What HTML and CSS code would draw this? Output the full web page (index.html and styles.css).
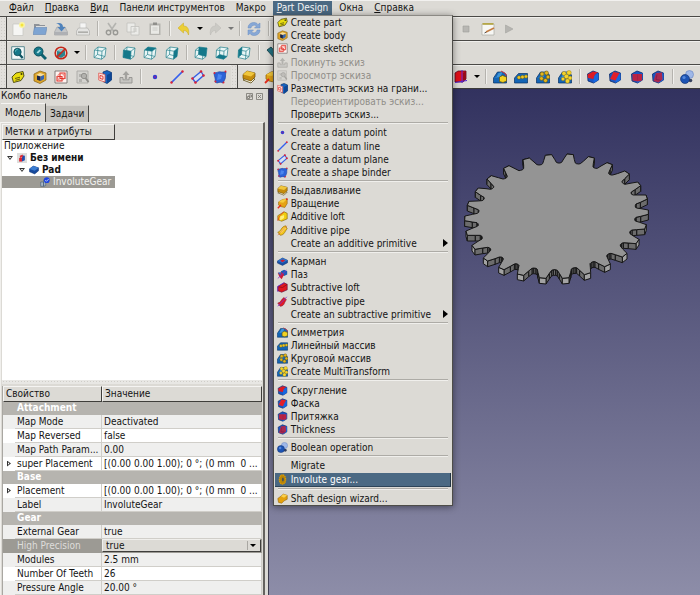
FILE: index.html
```html
<!DOCTYPE html>
<html lang="ru">
<head>
<meta charset="utf-8">
<title>Part Design</title>
<link rel="stylesheet" href="styles.css">
</head>
<body>
<svg class="defs" aria-hidden="true">
  <symbol id="new" viewBox="0 0 14 14"><path d="M2 2h10v11.500H2z" fill="#f6f6f4" stroke="#c4c4c0" stroke-width=".7"/><circle cx="11" cy="3" r="3" fill="#fbf4a0"/><circle cx="11" cy="3" r="1.500" fill="#f4e43c"/></symbol>
  <symbol id="open" viewBox="0 0 14 14"><path d="M1 12V2h5l1 1h5v9z" fill="#8e9298"/><path d="M3 4h9v4H3z" fill="#e0e0de"/><path d="M0 12.500l1.500-7H14L12.500 12.500z" fill="#7ea4d2" stroke="#6688b4" stroke-width=".6"/></symbol>
  <symbol id="save" viewBox="0 0 14 14"><path d="M3 5h8l2.500 5v3H.5v-3z" fill="#c4c6c8" stroke="#9a9ca0" stroke-width=".6"/><path d="M1 10h12v3H1z" fill="#aeb0b4"/><path d="M2 1.500c4-1.500 7 0 7 3.500h2.500L7.500 9.500 3.500 5H6c0-2-1-3-4-3.500z" fill="#4f82bb"/></symbol>
  <symbol id="print" viewBox="0 0 14 14"><path d="M4 1h6v6H4z" fill="#f5f5f4" stroke="#c4c4c4" stroke-width=".6"/><path d="M2.500 6h9L13.500 9v4H.5V9z" fill="#e4e4e2" stroke="#a8a8a6" stroke-width=".6"/><path d="M2 9.500h10v1.300H2z" fill="#a0a09c"/></symbol>
  <symbol id="cut" viewBox="0 0 14 14"><path d="M3 1l5.500 8M11 1L5.500 9" stroke="#b4b4b0" stroke-width="1.600" fill="none"/><circle cx="3.500" cy="10.500" r="2.200" fill="none" stroke="#989894" stroke-width="1.400"/><circle cx="10.500" cy="10.500" r="2.200" fill="none" stroke="#989894" stroke-width="1.400"/></symbol>
  <symbol id="copy" viewBox="0 0 14 14"><path d="M1 1h8v9H1zM5 4.500h8V13H5z" fill="#ebebe8" stroke="#c2c2be" stroke-width=".8"/><path d="M7 7h4M7 9h4" stroke="#c6c6c2" stroke-width=".8"/></symbol>
  <symbol id="paste" viewBox="0 0 14 14"><path d="M1.500 1.500h11V13h-11z" fill="#b5b4af"/><path d="M3 3.500h8v8.300H3z" fill="#e9e9e5"/><path d="M5 .5h4v2.500H5z" fill="#8f8f8b"/><path d="M4.500 6h5M4.500 8h5" stroke="#cacac6"/></symbol>
  <symbol id="undo" viewBox="0 0 14 14"><path d="M1 6l5.500-5v3c4 0 6 3 5 9-1-3-2-4.500-5-4.500V11z" fill="#eccf35" stroke="#c8a91c" stroke-width=".5"/></symbol>
  <symbol id="redo" viewBox="0 0 14 14"><path d="M13 6L7.500 1v3c-4 0-6 3-5 9 1-3 2-4.500 5-4.500V11z" fill="#cbcac5" stroke="#bab9b4" stroke-width=".5"/></symbol>
  <symbol id="refresh" viewBox="0 0 14 14"><path d="M1 6c0-6 8-7 10-3.500L13 1v5H7.500l2-2C8 2.500 4.500 3 4 6z" fill="#87a8d6" stroke="#6b8fc2" stroke-width=".5"/><path d="M13 8c0 6-8 7-10 3.500L1 13V8h5.500l-2 2c1.500 1.500 5 1 5.500-2z" fill="#87a8d6" stroke="#6b8fc2" stroke-width=".5"/></symbol>
  <symbol id="fit" viewBox="0 0 14 14"><path d="M.7.700h12.600v12.600H.7z" fill="#f3fafa" stroke="#3b747c" stroke-width=".8"/><path d="M8.500 8.500l3.200 3.500" stroke="#0e5563" stroke-width="2.400"/><circle cx="6.500" cy="6" r="3.700" fill="#16798a" stroke="#0c4650" stroke-width=".8"/><path d="M4.500 5.500c0-1.500 1-2 2-2" stroke="#6cc" fill="none"/></symbol>
  <symbol id="zoomsel" viewBox="0 0 14 14"><path d="M8.500 8.500l4.500 4.500" stroke="#0e6170" stroke-width="3"/><circle cx="5.500" cy="5.500" r="4.500" fill="#16798a" stroke="#0c4e5a"/><path d="M3.500 6.500l3-3 1.500 1-3 3z" fill="#a8dce2"/></symbol>
  <symbol id="nodraw" viewBox="0 0 14 14"><path d="M3 5l4-2 4 1.500v5L7 12l-4-2z" fill="#2c8490"/><path d="M3 5l4-2 4 1.500L7.500 6z" fill="#8cc8cc"/><circle cx="7" cy="7" r="5.800" fill="none" stroke="#c3281a" stroke-width="1.600"/><path d="M3 11l8-8" stroke="#c3281a" stroke-width="1.700"/></symbol>
  <symbol id="cube" viewBox="0 0 14 14"><path d="M5 1l8 1-1 8.500L8.500 13.300 1 11.500 1.500 4z" fill="#e9f6f6"/><path d="M1.500 4l7.500 1.200-.5 8L1 11.500zM9 5.200L13 2M8.500 13.300L12 10.500 13 2 5 1 1.500 4M5 1l-.5 7.500L1 11.500M4.500 8.500l7.500 2" fill="none" stroke="#2f8590" stroke-width=".75"/></symbol>
  <symbol id="front" viewBox="0 0 14 14"><use href="#cube"/><path d="M1.500 4L9 5.200l-.5 8L1 11.500z" fill="#14788a"/></symbol>
  <symbol id="top" viewBox="0 0 14 14"><use href="#cube"/><path d="M5 1l8 1-4 3.200L1.500 4z" fill="#14788a"/></symbol>
  <symbol id="right" viewBox="0 0 14 14"><use href="#cube"/><path d="M9 5.200L13 2l-1 8.500-3.500 2.800z" fill="#14788a"/></symbol>
  <symbol id="rear" viewBox="0 0 14 14"><use href="#cube"/><path d="M5 1l8 1-1 8.500-7.500-2z" fill="#14788a"/></symbol>
  <symbol id="bottom" viewBox="0 0 14 14"><use href="#cube"/><path d="M4.500 8.500l7.500 2-3.500 2.800L1 11.500z" fill="#14788a"/></symbol>
  <symbol id="left" viewBox="0 0 14 14"><use href="#cube"/><path d="M5 1l-.5 7.500L1 11.500 1.500 4z" fill="#14788a"/></symbol>
  <symbol id="ruler" viewBox="0 0 14 14"><path d="M1 4l4-3 8 9-4 3z" fill="#247484" stroke="#0d3941" stroke-width=".8"/></symbol>
  <symbol id="part" viewBox="0 0 14 14"><path d="M1 7l4-4 7-1.500L13 6l-3 4.500L2.500 12.500z" fill="#e8dc10" stroke="#45420a" stroke-width=".9"/><path d="M4 8.500l5-1.300M4.500 10.300l4.500-1.300" stroke="#55510c" stroke-width=".9"/><circle cx="10.500" cy="4" r="1" fill="#3d3a08"/></symbol>
  <symbol id="body" viewBox="0 0 14 14"><path d="M1 4l6-3 6 2v7l-6 3.500L1 11z" fill="#dda52a" stroke="#856011" stroke-width=".7"/><path d="M3 5l4-2 4.500 1.500L7.500 6.500z" fill="#f6dfa0"/><path d="M4 5.500l3.500 1V11L4 9.700z" fill="#182348"/><path d="M7.500 6.500L11 5v4L7.500 11z" fill="#3566b4"/></symbol>
  <symbol id="sketch" viewBox="0 0 14 14"><path d="M1 1h12v12H1z" fill="#fff3f0" stroke="#77716e" stroke-width=".9"/><path d="M3 6.500h5V11H3zM6 3h5v5.500H6z" fill="none" stroke="#e2322a" stroke-width="1.100"/><circle cx="7" cy="7" r="3.500" fill="none" stroke="#e66860" stroke-width=".8"/></symbol>
  <symbol id="viewsk" viewBox="0 0 14 14"><path d="M1 1h11v12H1z" fill="#d4d3cf" stroke="#aaa9a5" stroke-width=".9"/><path d="M3 4h3v3H3zM3 9h3v3H3z" fill="#b4b3af"/><circle cx="8" cy="6" r="2.700" fill="#b3b2ae" stroke="#92918d"/><path d="M9.500 8l3 4" stroke="#8f8e8a" stroke-width="1.800"/></symbol>
  <symbol id="mapsk" viewBox="0 0 14 14"><path d="M5 2l4-1.500 4.500 2V10L9 13.500l-4-2z" fill="#1763bf" stroke="#0a2a60" stroke-width=".7"/><path d="M9 5l4.500-2.500V10L9 13.500z" fill="#0e4795"/><path d="M.7 3L7 4.500v7.500L.7 10z" fill="#fde9e6" stroke="#e05a50" stroke-width=".8"/><path d="M2 5.500l3 .8v3L2 8.500z" fill="none" stroke="#dc2b24" stroke-width=".9"/></symbol>
  <symbol id="leave" viewBox="0 0 14 14"><path d="M1 7.500h3v2.300h6V7.500h3V13H1z" fill="#c6c5c1" stroke="#93928e" stroke-width=".9"/><path d="M7 1l3.500 4H8.200v4H5.800V5H3.500z" fill="#a3a29e"/></symbol>
  <symbol id="point" viewBox="0 0 14 14"><circle cx="7" cy="7" r="2.200" fill="#2d3fd4"/><circle cx="7" cy="7" r="1" fill="#8c1f9c"/></symbol>
  <symbol id="line" viewBox="0 0 14 14"><path d="M1.500 12.500l11-11" stroke="#3560ee" stroke-width="1.700"/><circle cx="1.500" cy="12.500" r="1.200" fill="#dc2338"/><circle cx="12.500" cy="1.500" r="1.200" fill="#dc2338"/></symbol>
  <symbol id="plane" viewBox="0 0 14 14"><path d="M1.500 8.500L10 1.500l2.500 4L4.500 12.500z" fill="#d8e1f4" stroke="#3560e4" stroke-width="1.400"/><g fill="#dc2338"><circle cx="1.500" cy="8.500" r="1.300"/><circle cx="10" cy="1.500" r="1.300"/><circle cx="12.500" cy="5.500" r="1.300"/><circle cx="4.500" cy="12.500" r="1.300"/></g></symbol>
  <symbol id="binder" viewBox="0 0 14 14"><path d="M1 3c3 0 5-2 7-1h5c-1 3 0 5-1 7l-2 4c-2-1-3-1-6 0L2 12c1-4-1-6-1-9z" fill="#2c63d8" stroke="#1e43a4" stroke-width=".7"/><path d="M5 4l4 1-1 4-4 1z" fill="#4b86ee"/><g fill="#dc2338"><circle cx="1.500" cy="3" r="1"/><circle cx="12.500" cy="1.500" r="1"/><circle cx="10.500" cy="12.500" r="1"/><circle cx="2.500" cy="11.500" r="1"/></g></symbol>
  <symbol id="pad" viewBox="0 0 14 14"><path d="M1 10l4-3 8 2-4 4z" fill="#f8f4df" stroke="#5a4a10" stroke-width=".8"/><path d="M1 4.500L5 1l8 2v4L9 11 1 8.500z" fill="#c68d0d" stroke="#6c4b06" stroke-width=".7"/><path d="M1 4.500L5 1l8 2-4 3.500z" fill="#f0c63c"/></symbol>
  <symbol id="rev" viewBox="0 0 14 14"><path d="M2 5l5-3 6-1v6l-3 5-5-1-3-2z" fill="#e5a416" stroke="#8d5c06" stroke-width=".7"/><path d="M2 5l5-3 6-1-5 5z" fill="#f6cc3c"/><path d="M1 13l4-4" stroke="#e22c1c" stroke-width="1.800"/><circle cx="12.500" cy="1.500" r="1.200" fill="#e22c1c"/></symbol>
  <symbol id="aloft" viewBox="0 0 14 14"><path d="M1 6l8-5 4 2v7l-7 3-5-2z" fill="#f0cd10" stroke="#806208" stroke-width=".8"/><path d="M4 7l5-2v4l-5 3z" fill="#ffef7c"/><path d="M1 12.500l2-6 6-5.500" stroke="#e8431f" fill="none" stroke-width="1.100"/></symbol>
  <symbol id="apipe" viewBox="0 0 14 14"><path d="M1 9c4 0 4-7 10-8l2 4c-3 2-3 8-9 8z" fill="#f2c420" stroke="#8d6806" stroke-width=".8"/><path d="M4 9.500c3-1 4-5 7-6" stroke="#fff08c" fill="none" stroke-width="1.500"/><path d="M1 13L12.500 1" stroke="#e6632a" stroke-width=".8"/></symbol>
  <symbol id="pocket" viewBox="0 0 14 14"><path d="M.5 6.500L7 2.500l6.500 3v3L7 12 .5 9z" fill="#1850a6" stroke="#0b2a66" stroke-width=".6"/><path d="M.5 6.500L7 2.500l6.500 3L7 9z" fill="#2c72cc"/><path d="M4 6l3-1.500 3.500 1.200L7 8z" fill="#cd1d32"/></symbol>
  <symbol id="padtree" viewBox="0 0 14 14"><path d="M.5 5.500L6 1.500l7.500 2.500v4L8 12.500.5 9.500z" fill="#17499c" stroke="#0b2a66" stroke-width=".6"/><path d="M.5 5.500L6 1.500l7.500 2.500L8 8z" fill="#3c7ed2"/></symbol>
  <symbol id="groove" viewBox="0 0 14 14"><path d="M5 3l4-2 4 2v4L9 9 5 7z" fill="#1d5cb8"/><path d="M1 5l5-1 3 3-3 6-3-3z" fill="#cf1d30"/><path d="M1 4.500h5L4 8z" fill="#2a6fd0"/><path d="M1 12L12 1.500" stroke="#8b2ac8"/></symbol>
  <symbol id="sloft" viewBox="0 0 14 14"><path d="M1 6l8-5 4 2v7l-7 3-5-2z" fill="#df1820" stroke="#570b3f" stroke-width=".8"/><path d="M1 6l6 1 6-4" stroke="#8e0e1a" fill="none"/><path d="M1 12.500v-7L9 1" stroke="#6626c4" fill="none"/></symbol>
  <symbol id="spipe" viewBox="0 0 14 14"><path d="M1 9c4 0 4-5 8-7l3 3c-3 2-2 8-8 8z" fill="#e21b28" stroke="#8a1436" stroke-width=".8"/><path d="M1 13L12.500 1" stroke="#7a2cd0"/></symbol>
  <symbol id="base" viewBox="0 0 14 14"><path d="M.5 13V8l4-6h6l3 3v8z" fill="#1465b5" stroke="#073163" stroke-width=".7"/><path d="M.5 8l3-1 2-4 4-1-2 5z" fill="#3c94d6"/></symbol>
  <symbol id="mirror" viewBox="0 0 14 14"><use href="#base"/><path d="M6.500 7l3-1.500 4 1.500v4l-3.500 1.500-3.500-1z" fill="#f3d222" stroke="#665207" stroke-width=".7"/><path d="M8 1l5 3v2" stroke="#c93843" fill="none"/></symbol>
  <symbol id="linear" viewBox="0 0 14 14"><path d="M.5 13V8l4-4.500h9V13z" fill="#1465b5" stroke="#073163" stroke-width=".7"/><g fill="#efc61e" stroke="#645006" stroke-width=".4"><circle cx="5" cy="7.500" r="1.800"/><circle cx="8.500" cy="7" r="1.800"/><circle cx="12" cy="6.500" r="1.700"/></g></symbol>
  <symbol id="polar" viewBox="0 0 14 14"><use href="#base"/><g fill="#e4b51a" stroke="#5c4a06" stroke-width=".5"><circle cx="6" cy="4" r="2"/><circle cx="10.500" cy="3" r="2"/><circle cx="12" cy="7" r="1.900"/><circle cx="9.500" cy="10.500" r="2"/><circle cx="5.500" cy="8.500" r="1.900"/></g></symbol>
  <symbol id="multi" viewBox="0 0 14 14"><use href="#base"/><g fill="#f6d42c" stroke="#8c700a" stroke-width=".4"><circle cx="6" cy="3.500" r="2.100"/><circle cx="11" cy="2.800" r="2.300"/><circle cx="8.500" cy="6.500" r="2.300"/><circle cx="12" cy="8" r="2"/><circle cx="9.500" cy="11" r="2.200"/><circle cx="5" cy="9" r="1.800"/></g></symbol>
  <symbol id="solid" viewBox="0 0 14 14"><path d="M1.500 4L7 1l5.500 2v7L7.500 13 2 11z" fill="#1957c4" stroke="#0b2968" stroke-width=".8"/><path d="M7.500 6l5-3v7l-5 3z" fill="#1667e0"/></symbol>
  <symbol id="fillet" viewBox="0 0 14 14"><use href="#solid"/><path d="M1.500 4.500L7 1.500l5 1C9 3.500 8 6 7.500 9L2 8z" fill="#dc1b25"/></symbol>
  <symbol id="chamfer" viewBox="0 0 14 14"><use href="#solid"/><path d="M5.500 2l6 1-4 7.500L2 9z" fill="#e2202a"/></symbol>
  <symbol id="draft" viewBox="0 0 14 14"><use href="#solid"/><path d="M2.500 4h9.500v6.500l-4 1-5.500-1z" fill="#b92344"/><path d="M7.500 4.500v6" stroke="#94204a" stroke-width=".6"/></symbol>
  <symbol id="thick" viewBox="0 0 14 14"><use href="#solid"/><path d="M5 3l6-.5.500 7-4 3-5-1.500z" fill="#a92950"/><path d="M6 4.500l-1 5 5 1" stroke="#7a1a48" stroke-width=".7" fill="none"/></symbol>
  <symbol id="bool" viewBox="0 0 14 14"><circle cx="10.500" cy="10.500" r="1.800" fill="#35415e"/><circle cx="9.500" cy="4.500" r="4" fill="#9fb8e8" stroke="#6484c2" stroke-width=".6"/><circle cx="5" cy="9" r="4.500" fill="#1d54b4" stroke="#0b2b6c" stroke-width=".6"/><circle cx="4" cy="7.500" r="1.600" fill="#5287dc"/></symbol>
  <symbol id="gear" viewBox="0 0 14 14"><ellipse cx="7" cy="7" rx="4" ry="6" fill="#b98506" stroke="#d89b08" stroke-width="1.600" stroke-dasharray="1.600 .8"/><ellipse cx="7.500" cy="7" rx="1.200" ry="2.500" fill="#44535a"/></symbol>
  <symbol id="shaft" viewBox="0 0 14 14"><path d="M1 7l4-3 3-2.500L13 3v5l-4 2-3 3-4-1z" fill="#e4a10c" stroke="#8b5c05" stroke-width=".7"/><path d="M5 4l3-2.500L13 3l-4 3z" fill="#fad04c"/></symbol>
  <symbol id="redcube" viewBox="0 0 14 14"><path d="M1 3l3-2h8v8l-3 3H1z" fill="#e00f18" stroke="#5c0720" stroke-width=".8"/><path d="M9 3l3-2v8l-3 3z" fill="#960b17"/><path d="M8 0v13M1 12.500l12-2" stroke="#5428d4"/></symbol>
  <symbol id="stop" viewBox="0 0 14 14"><path d="M4 4h6v6H4z" fill="#b8b7b3" stroke="#9f9e9a" stroke-width=".6"/></symbol>
  <symbol id="note" viewBox="0 0 14 14"><path d="M1 2h12v11H1z" fill="#f7f7f4" stroke="#aaa9a5" stroke-width=".7"/><path d="M1.500 1h11v1.800h-11z" fill="#b5a748"/><path d="M5 10l8-4" stroke="#c47d42" stroke-width="1.800"/><path d="M3.500 11l2-1" stroke="#555"/></symbol>
  <symbol id="play" viewBox="0 0 14 14"><path d="M3.500 3l7.500 4-7.500 4z" fill="#b6b5b1" stroke="#a5a4a0" stroke-width=".6"/></symbol>
  <symbol id="doc" viewBox="0 0 14 14"><path d="M0 0h14v14H0z" fill="#dededc"/><path d="M3 7h4v5H3z" fill="#dc2632"/><path d="M7 3l4 1v6l-4 2z" fill="#214cae"/><path d="M4 4l4-2v4L4 7z" fill="#e42b34"/></symbol>
  <symbol id="geartree" viewBox="0 0 14 14"><path d="M1 7h4v6H1zM5 4l3 2v6l-3 1z" fill="#a9b8c8" stroke="#3e5774" stroke-width=".8"/><circle cx="9.500" cy="4.500" r="4" fill="#1f46e0"/><path d="M7.500 4.500l1.500 1.500 3-3" stroke="#fff" fill="none"/></symbol>
</svg>

<nav class="menubar">
  <button><u>Ф</u>айл</button><button><u>П</u>равка</button><button><u>В</u>ид</button><button>Панели инструментов</button><button>Макро</button>
  <div class="menu-host">
    <button class="open"><u>P</u>art Design</button>
    <div class="popup" role="menu">
      <button role="menuitem"><svg><use href="#part"/></svg>Create part</button>
      <button role="menuitem"><svg><use href="#body"/></svg>Create body</button>
      <button role="menuitem"><svg><use href="#sketch"/></svg>Create sketch</button>
      <button role="menuitem" disabled><svg><use href="#leave"/></svg>Покинуть эскиз</button>
      <button role="menuitem" disabled><svg><use href="#viewsk"/></svg>Просмотр эскиза</button>
      <button role="menuitem"><svg><use href="#mapsk"/></svg>Разместить эскиз на грани...</button>
      <button role="menuitem" disabled><svg></svg>Переориентировать эскиз...</button>
      <button role="menuitem"><svg></svg>Проверить эскиз...</button>
      <hr>
      <button role="menuitem"><svg><use href="#point"/></svg>Create a datum point</button>
      <button role="menuitem"><svg><use href="#line"/></svg>Create a datum line</button>
      <button role="menuitem"><svg><use href="#plane"/></svg>Create a datum plane</button>
      <button role="menuitem"><svg><use href="#binder"/></svg>Create a shape binder</button>
      <hr>
      <button role="menuitem"><svg><use href="#pad"/></svg>Выдавливание</button>
      <button role="menuitem"><svg><use href="#rev"/></svg>Вращение</button>
      <button role="menuitem"><svg><use href="#aloft"/></svg>Additive loft</button>
      <button role="menuitem"><svg><use href="#apipe"/></svg>Additive pipe</button>
      <button role="menuitem" class="sub"><svg></svg>Create an additive primitive</button>
      <hr>
      <button role="menuitem"><svg><use href="#pocket"/></svg>Карман</button>
      <button role="menuitem"><svg><use href="#groove"/></svg>Паз</button>
      <button role="menuitem"><svg><use href="#sloft"/></svg>Subtractive loft</button>
      <button role="menuitem"><svg><use href="#spipe"/></svg>Subtractive pipe</button>
      <button role="menuitem" class="sub"><svg></svg>Create an subtractive primitive</button>
      <hr>
      <button role="menuitem"><svg><use href="#mirror"/></svg>Симметрия</button>
      <button role="menuitem"><svg><use href="#linear"/></svg>Линейный массив</button>
      <button role="menuitem"><svg><use href="#polar"/></svg>Круговой массив</button>
      <button role="menuitem"><svg><use href="#multi"/></svg>Create MultiTransform</button>
      <hr>
      <button role="menuitem"><svg><use href="#fillet"/></svg>Скругление</button>
      <button role="menuitem"><svg><use href="#chamfer"/></svg>Фаска</button>
      <button role="menuitem"><svg><use href="#draft"/></svg>Притяжка</button>
      <button role="menuitem"><svg><use href="#thick"/></svg>Thickness</button>
      <hr>
      <button role="menuitem"><svg><use href="#bool"/></svg>Boolean operation</button>
      <hr>
      <button role="menuitem"><svg></svg>Migrate</button>
      <button role="menuitem" class="current"><svg><use href="#gear"/></svg>Involute gear...</button>
      <hr>
      <button role="menuitem"><svg><use href="#shaft"/></svg>Shaft design wizard...</button>
    </div>
  </div>
  <button>Окна</button><button><u>С</u>правка</button>
</nav>

<div class="toolbar">
  <i class="grip"></i>
  <div class="group file">
    <button aria-label="New"><svg><use href="#new"/></svg></button><button aria-label="Open"><svg><use href="#open"/></svg></button><button aria-label="Save"><svg><use href="#save"/></svg></button><button aria-label="Print"><svg><use href="#print"/></svg></button><i class="sep"></i>
    <button aria-label="Cut"><svg><use href="#cut"/></svg></button><button aria-label="Copy"><svg><use href="#copy"/></svg></button><button aria-label="Paste"><svg><use href="#paste"/></svg></button><i class="sep"></i>
    <button aria-label="Undo"><svg><use href="#undo"/></svg></button><button class="drop" aria-label="Undo list"></button><button aria-label="Redo"><svg><use href="#redo"/></svg></button><button class="drop off" aria-label="Redo list"></button><i class="sep"></i>
    <button aria-label="Refresh"><svg><use href="#refresh"/></svg></button>
  </div>
  <i class="sep"></i>
  <div class="group macro">
    <button aria-label="Stop"><svg><use href="#stop"/></svg></button><button aria-label="Macros"><svg><use href="#note"/></svg></button><button aria-label="Run"><svg><use href="#play"/></svg></button>
  </div>
</div>
<div class="toolbar">
  <i class="grip"></i>
  <div class="group view-tools">
    <button aria-label="Fit all"><svg><use href="#fit"/></svg></button><button aria-label="Fit selection"><svg><use href="#zoomsel"/></svg></button><button aria-label="Draw style"><svg><use href="#nodraw"/></svg></button><button class="drop" aria-label="Draw styles"></button><i class="sep"></i>
    <button aria-label="Axonometric"><svg><use href="#cube"/></svg></button><i class="sep"></i>
    <button aria-label="Front"><svg><use href="#front"/></svg></button><button aria-label="Top"><svg><use href="#top"/></svg></button><button aria-label="Right"><svg><use href="#right"/></svg></button><i class="sep"></i>
    <button aria-label="Rear"><svg><use href="#rear"/></svg></button><button aria-label="Bottom"><svg><use href="#bottom"/></svg></button><button aria-label="Left"><svg><use href="#left"/></svg></button>
  </div>
  <i class="sep"></i>
  <button class="fixed" aria-label="Measure"><svg><use href="#ruler"/></svg></button>
</div>
<div class="toolbar">
  <i class="grip"></i>
  <div class="group design">
    <button aria-label="Part"><svg><use href="#part"/></svg></button><button aria-label="Body"><svg><use href="#body"/></svg></button><button aria-label="Sketch"><svg><use href="#sketch"/></svg></button><button aria-label="View sketch"><svg><use href="#viewsk"/></svg></button><button aria-label="Map sketch"><svg><use href="#mapsk"/></svg></button><button aria-label="Leave sketch"><svg><use href="#leave"/></svg></button><i class="sep"></i>
    <button aria-label="Point"><svg><use href="#point"/></svg></button><button aria-label="Line"><svg><use href="#line"/></svg></button><button aria-label="Plane"><svg><use href="#plane"/></svg></button><button aria-label="Binder"><svg><use href="#binder"/></svg></button>
  </div>
  <i class="grip"></i>
  <button class="fixed" aria-label="Pad"><svg><use href="#pad"/></svg></button><button class="fixed" aria-label="Revolution"><svg><use href="#rev"/></svg></button>
  <div class="group transform">
    <button aria-label="Primitive"><svg><use href="#redcube"/></svg></button><button class="drop" aria-label="Primitives"></button><i class="sep"></i>
    <button aria-label="Mirror"><svg><use href="#mirror"/></svg></button><button aria-label="Linear pattern"><svg><use href="#linear"/></svg></button><button aria-label="Polar pattern"><svg><use href="#polar"/></svg></button><button aria-label="MultiTransform"><svg><use href="#multi"/></svg></button><i class="sep"></i>
    <button aria-label="Fillet"><svg><use href="#fillet"/></svg></button><button aria-label="Chamfer"><svg><use href="#chamfer"/></svg></button><button aria-label="Draft"><svg><use href="#draft"/></svg></button><button aria-label="Thickness"><svg><use href="#thick"/></svg></button><i class="sep"></i>
    <button aria-label="Boolean"><svg><use href="#bool"/></svg></button>
  </div>
</div>

<main>
  <aside>
    <header class="dock-title"><span>Комбо панель</span>
      <button aria-label="Float"><svg viewBox="0 0 7 7"><path d="M.5.500h6v6h-6zM3 2h2.500v2H3zM1.500 3.500h2v2h-2z"/></svg></button>
      <button aria-label="Close"><svg viewBox="0 0 7 7"><path d="M.5.500h6v6h-6zM2 2l3 3M5 2L2 5"/></svg></button>
    </header>
    <div class="tabs" role="tablist"><button role="tab" class="active">Модель</button><button role="tab">Задачи</button></div>
    <section class="pane">
      <div class="tree">
        <div class="tree-head"><button>Метки и атрибуты</button></div>
        <ul>
          <li>Приложение</li>
          <li class="l1"><i class="caret"></i><svg><use href="#doc"/></svg><b>Без имени</b></li>
          <li class="l2"><i class="caret"></i><svg><use href="#padtree"/></svg><b>Pad</b></li>
          <li class="l3"><svg><use href="#geartree"/></svg>InvoluteGear</li>
        </ul>
      </div>
      <div class="splitter"></div>
      <div class="props">
        <table>
          <colgroup><col class="c-mark"><col class="c-name"><col></colgroup>
          <thead><tr><th colspan="2">Свойство</th><th>Значение</th></tr></thead>
          <tbody>
            <tr class="cat"><td></td><td colspan="2">Attachment</td></tr>
            <tr class="alt"><td></td><td>Map Mode</td><td>Deactivated</td></tr>
            <tr><td></td><td>Map Reversed</td><td>false</td></tr>
            <tr class="alt"><td></td><td>Map Path Param...</td><td>0.00</td></tr>
            <tr><td><i class="closed"></i></td><td>super Placement</td><td>[(0.00 0.00 1.00); 0 °; (0 mm&nbsp; 0 ...</td></tr>
            <tr class="cat"><td></td><td colspan="2">Base</td></tr>
            <tr><td><i class="closed"></i></td><td>Placement</td><td>[(0.00 0.00 1.00); 0 °; (0 mm&nbsp; 0 ...</td></tr>
            <tr class="alt"><td></td><td>Label</td><td>InvoluteGear</td></tr>
            <tr class="cat"><td></td><td colspan="2">Gear</td></tr>
            <tr class="alt"><td></td><td>External Gear</td><td>true</td></tr>
            <tr class="picked"><td></td><td><label for="precision">High Precision</label></td><td class="edit"><div class="combo"><select id="precision"><option>true</option><option>false</option></select></div></td></tr>
            <tr class="alt"><td></td><td>Modules</td><td>2.5 mm</td></tr>
            <tr><td></td><td>Number Of Teeth</td><td>26</td></tr>
            <tr class="alt"><td></td><td>Pressure Angle</td><td>20.00 °</td></tr>
          </tbody>
        </table>
      </div>
    </section>
  </aside>
  <div class="viewport"><svg id="model" viewBox="0 0 615 435"></svg></div>
</main>
<script src="gear.js"></script>
</body>
</html>
```
FILE: styles.css
```css
* { box-sizing: border-box; }
body {
  margin: 0;
  height: 100vh;
  display: flex;
  flex-direction: column;
  overflow: hidden;
  background: #dcdad5;
  color: #141414;
  font: 10px/12px "DejaVu Sans Condensed", "DejaVu Sans", sans-serif;
}
button, select { font: inherit; color: inherit; border: 0; padding: 0; margin: 0; background: none; }
svg { display: block; flex: none; }
.defs { position: absolute; width: 0; height: 0; }

.menubar { display: flex; gap: 3px; height: 16px; padding-left: 5px; border-top: 1px solid #f2f1ef; flex: none; }
.menubar > button, .menu-host > button { padding: 0 4px; height: 14px; white-space: nowrap; }
.menu-host { position: relative; }
.menu-host .open { background: #4b6983; color: #f4f4f4; }
.popup {
  position: absolute;
  z-index: 5;
  top: 14px;
  left: 0;
  width: 180px;
  min-height: 491px;
  display: flex;
  flex-direction: column;
  padding: 0 1px;
  background: #dcdad5;
  border: 1px solid #4e4d49;
  border-top-color: #8b8984;
  box-shadow: 0 1px 7px rgba(0, 0, 0, .45);
}
.popup button {
  flex: 1;
  display: flex;
  align-items: center;
  gap: 3px;
  padding-left: 2px;
  line-height: 13px;
  white-space: nowrap;
  text-align: left;
}
.popup svg { width: 11px; height: 11px; }
.popup button:disabled { color: #8f8d88; }
.popup button:disabled svg { opacity: .7; }
.popup .current { background: #4b6983; color: #fff; border-right: 1px solid #223444; border-bottom: 1px solid #2d4458; }
.popup hr { width: calc(100% - 6px); height: 2px; margin: 1px 3px 2px; border: 0; border-top: 1px solid #adaba6; border-bottom: 1px solid #f0efec; }
.sub::after { content: ""; margin: 0 3px 0 auto; border: 4px solid transparent; border-left: 5px solid #000; border-right: 0; }

.toolbar { display: flex; height: 24px; flex: none; border-top: 1px solid #4a4946; box-shadow: inset 0 1px #f0efec; }
.toolbar button { display: grid; place-items: center; min-width: 0; }
.toolbar svg { width: 14px; height: 14px; }
.group { display: flex; flex: none; }
.group button { flex: 1; }
.file { width: 258px; }
.view-tools { width: 248px; }
.design { width: 224px; }
.macro { width: 65px; margin-left: 183px; }
.transform { width: 248px; margin-left: 168px; }
.toolbar .fixed { width: 22px; flex: none; }
.grip { width: 7px; flex: none; border-right: 1px solid #4a4946; background: radial-gradient(circle, #cfcdc8 1px, #e2e0dc 1px) 0 0 / 3px 3px; }
.sep { width: 7px; flex: none; margin: 4px 0; background: linear-gradient(90deg, transparent 3px, #b5b3ae 3px, #b5b3ae 4px, #f1f0ed 4px, #f1f0ed 5px, transparent 5px); }
.toolbar .drop { flex: none; width: 10px; }
.drop::after { content: ""; border: 3px solid transparent; border-top-color: #000; border-bottom: 0; }
.drop.off::after { border-top-color: #777; }

main { flex: 1; min-height: 0; display: flex; border-top: 1px solid #3c3b39; }
aside { width: 269px; flex: none; display: flex; flex-direction: column; border-right: 1px solid #3e3d50; padding-right: 3px; min-height: 0; }
.dock-title { display: flex; align-items: center; gap: 3px; padding: 0 2px 0 1px; height: 14px; flex: none; }
.dock-title span { flex: 1; }
.dock-title svg { width: 7px; height: 7px; fill: none; stroke: #77756f; stroke-width: .8; }
.tabs { display: flex; align-items: flex-end; height: 19px; flex: none; padding-left: 1px; }
.tabs button { height: 17px; padding: 0 4px; background: #c4c2bd; border-right: 1px solid #4a4946; border-top: 1px solid #d8d6d1; }
.tabs .active { height: 19px; background: #dcdad5; border-top-color: #f5f4f2; }
.pane { flex: 1; min-height: 0; display: flex; flex-direction: column; border-top: 1px solid #f5f4f2; border-left: 1px solid #f0efec; border-right: 2px solid #65635f; }
.tree { height: 256px; flex: none; margin: 1px 1px 0; background: #fff; }
.tree-head { background: #dcdad5; }
.tree-head button { width: 113px; height: 16px; padding-left: 2px; text-align: left; border: 1px solid #f5f4f2; border-right-color: #3f3e3b; border-bottom-color: #3f3e3b; }
.tree ul { list-style: none; margin: 0; padding: 0; }
.tree li { display: flex; align-items: center; height: 12px; padding-left: 2px; }
.tree li svg { width: 10px; height: 10px; margin-right: 3px; }
.tree .l1 { padding-left: 5px; }
.tree .l2 { padding-left: 17px; }
.tree .l3 { width: 113px; padding-left: 38px; background: #9c9a94; color: #f2f2f0; }
.caret { width: 6px; height: 4px; margin-right: 4px; background: #333; clip-path: polygon(0 0, 100% 0, 50% 100%, 0 0, 30% 25%, 50% 65%, 70% 25%, 30% 25%); }
.splitter { height: 4px; margin: 0 1px 2px; flex: none; background: radial-gradient(circle, #cfcdc8 1px, #e8e7e4 1px) 0 0 / 3px 3px; }
.props { flex: 1; min-height: 0; overflow: hidden; margin: 0 1px; border-left: 1px solid #a9a7a2; }
table { width: 100%; table-layout: fixed; border-collapse: separate; border-spacing: 0; }
.c-mark { width: 12px; }
.c-name { width: 87px; }
th { height: 16px; padding: 0 2px; text-align: left; font-weight: normal; border: 1px solid #f5f4f2; border-right-color: #3f3e3b; border-bottom-color: #3f3e3b; }
td { height: 14px; padding: 0 0 0 2px; white-space: nowrap; background: #fff; border-bottom: 1px solid #d0cec9; border-right: 1px solid #d0cec9; }
td:first-child { border-color: transparent; border-right: 0; }
.alt td { background: #efefee; }
.cat td { height: 13px; background: #b6b4af; color: #fff; font-weight: bold; border-color: #b6b4af; }
.picked td { background: #9c9a94; color: #dedddb; border-color: #9c9a94; }
.picked .edit { padding: 0; color: #141414; }
.combo { position: relative; height: 13px; background: #dcdad5; border: 1px solid #f0efec; border-right-color: #3f3e3b; border-bottom-color: #3f3e3b; }
.combo::after { content: ""; position: absolute; right: 4px; top: 4px; border: 3px solid transparent; border-top-color: #000; border-bottom: 0; }
.combo::before { content: ""; position: absolute; right: 12px; top: 1px; bottom: 1px; border-left: 1px solid #a9a7a2; }
select { appearance: none; display: block; width: 100%; height: 11px; line-height: 11px; padding-left: 3px; }
.closed { display: block; width: 4px; height: 6px; margin-left: 2px; background: #333; clip-path: polygon(0 0, 100% 50%, 0 100%, 0 0, 25% 30%, 25% 70%, 60% 50%, 25% 30%); }

.viewport { flex: 1; min-width: 0; overflow: hidden; padding: 56px 0 0 186px; background: linear-gradient(#32325f, #8d8da8); }
#model { width: 205px; height: 145px; }
#model path { stroke: #161616; stroke-width: 3; stroke-linejoin: round; }
```
FILE: gear.js
```js
// Tooth tips of the gear's upper face, clockwise from the top.
const tips = [[281,31],[345,29],[409,38],[463,57],[515,83],[551,117],[574,156],[578,202],[570,245],
  [546,289],[508,330],[457,360],[397,385],[332,398],[263,398],[197,388],[140,370],[93,343],[57,306],
  [37,264],[31,220],[41,175],[67,135],[103,98],[155,67],[214,42]];
const centre = [306, 213];
const depth = 17;

function pointAt(i, t, ratio) {
  const n = tips.length;
  const a = tips[i];
  const b = tips[(i + (t < 0 ? n - 1 : 1)) % n];
  const k = Math.abs(t);
  return [0, 1].map(c => centre[c] + (a[c] + (b[c] - a[c]) * k - centre[c]) * ratio);
}

// Each tooth: root, flank and tip points, symmetric about its axis.
const profile = [[0.44, 0.87], [0.36, 0.88], [0.27, 0.93], [0.15, 1.01]];
const outline = tips.flatMap((_, i) => [
  ...profile.map(([t, r]) => pointAt(i, -t, r)),
  ...[...profile].reverse().map(([t, r]) => pointAt(i, t, r))
]);
const toPath = pts => 'M' + pts.map(p => p.map(Math.round).join(' ')).join('L') + 'Z';

const sides = outline.map((p, i) => {
  const q = outline[(i + 1) % outline.length];
  const tip = i % 8 === 3;
  return { y: p[1] + q[1], facing: p[0] > q[0], tip,
    d: toPath([p, q, [q[0], q[1] + depth], [p[0], p[1] + depth]]) };
}).filter(s => s.facing || s.tip).sort((a, b) => a.y - b.y);

document.getElementById('model').innerHTML =
  sides.map(s => `<path fill="${s.tip ? '#a3a3a3' : '#6c6c6c'}" d="${s.d}"/>`).join('') +
  `<path fill="#949494" d="${toPath(outline)}"/>`;
```
